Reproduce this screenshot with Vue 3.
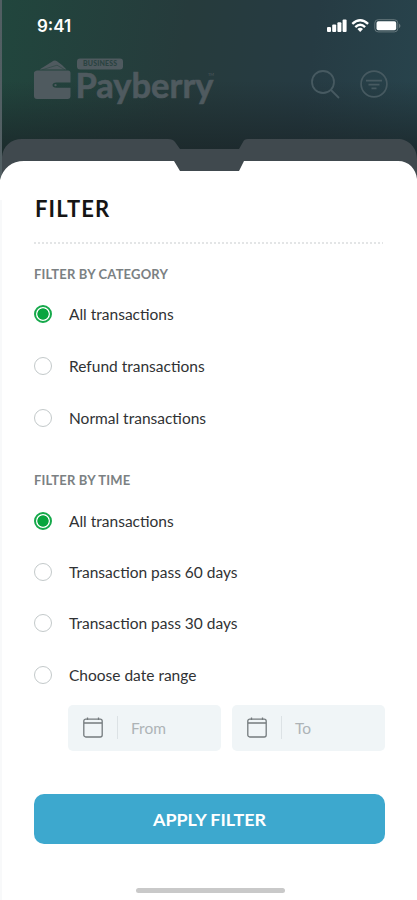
<script setup>
import { ref } from 'vue'

const category = ref('all')
const time = ref('all')
const categories = [
  { value: 'all', label: 'All transactions' },
  { value: 'refund', label: 'Refund transactions' },
  { value: 'normal', label: 'Normal transactions' },
]
const times = [
  { value: 'all', label: 'All transactions' },
  { value: '60', label: 'Transaction pass 60 days' },
  { value: '30', label: 'Transaction pass 30 days' },
  { value: 'range', label: 'Choose date range' },
]
const dates = ['From', 'To']
</script>

<template>
  <div class="screen">
    <svg class="sheets" width="417" height="200" viewBox="0 0 417 200" aria-hidden="true">
      <path class="sheet-back" d="M2 200V157C3 146 11 139 22 139H168Q173 139 175 142L180 149H239L243 142Q244 139 248 139H398C408 139 417 147 417 159V200Z" />
      <path class="sheet-front" d="M0 200V180C3 168 12 161 24 161H174L180 171H239L244 161H398C409 161 416 169 417 179V200Z" />
    </svg>

    <header class="top">
      <div class="status">
        <span class="clock">9:41</span>
        <svg width="76" height="16" viewBox="0 0 76 16" fill="#fff">
          <rect x="1" y="9" width="4" height="5" rx="1" />
          <rect x="6.2" y="6.5" width="4" height="7.5" rx="1" />
          <rect x="11.4" y="4.2" width="4" height="9.8" rx="1" />
          <rect x="16.6" y="1.5" width="4" height="12.5" rx="1" />
          <g fill="none" stroke="#fff" stroke-width="2.4">
            <path d="M26.3 5.8Q34.2-1.5 42.1 5.8" />
            <path d="M29.3 9.1Q34.2 4.5 39.1 9.1" />
          </g>
          <path d="M31.4 11Q34.2 8.6 37 11L34.2 14Z" />
          <rect x="48.8" y="1.7" width="23" height="12.2" rx="3.4" fill="none" stroke="#65777c" stroke-width="1" />
          <rect x="50.5" y="3.3" width="19.7" height="9" rx="1.8" />
          <path d="M73 5.4Q76 7.8 73 10.2Z" fill="#65777c" />
        </svg>
      </div>

      <div class="brand-bar">
        <svg class="logo" width="182" height="48" viewBox="0 0 182 48">
          <path d="M5.5 11.5L19.5 2.8Q21.2 1.8 23 3.2L28 7L32.5 11.5H5.5Z" fill="#4f5a5f" />
          <path d="M8 11.8L23 7.2L31 11.8" fill="none" stroke="#2a4642" stroke-width="0.6" />
          <path d="M3.5 12.5H34Q36.5 12.5 36.5 15V24.5H22.5Q18.5 24.5 18.5 27Q18.5 29.8 22.5 29.8H36.5V38Q36.5 41 33.5 41H3Q0 41 0 38V15Q0 13 3.5 12.5Z" fill="#4f5a5f" />
          <circle cx="21.5" cy="27.1" r="1.2" fill="#4f5a5f" />
          <rect x="43" y="0.5" width="46" height="11" rx="3" fill="#4f5a5f" />
          <text class="badge-text" x="49" y="8.4" textLength="34">BUSINESS</text>
          <text class="brand-text" x="41.5" y="40" textLength="138" lengthAdjust="spacingAndGlyphs">Payberry</text>
          <text class="tm" x="174" y="18">TM</text>
        </svg>
        <div class="actions">
          <svg width="29" height="29" viewBox="0 0 29 29" fill="none" stroke="#475a61" stroke-width="1.8">
            <circle cx="12" cy="12" r="11" />
            <path d="M20 20L28 28" />
          </svg>
          <svg width="28" height="28" viewBox="0 0 28 28" fill="none" stroke="#475a61" stroke-width="1.7">
            <circle cx="14" cy="14" r="12.9" />
            <path d="M6 10.7H22M8.5 14.7H19.5M11.5 18.4H16.5" />
          </svg>
        </div>
      </div>
    </header>

    <main class="sheet">
      <h1>FILTER</h1>
      <div class="divider"></div>

      <section class="category">
        <h2>FILTER BY CATEGORY</h2>
        <label v-for="c in categories" :key="c.value" class="option">
          <input v-model="category" type="radio" name="category" :value="c.value" />
          <span class="radio"></span>
          <span class="label">{{ c.label }}</span>
        </label>
      </section>

      <section class="time">
        <h2>FILTER BY TIME</h2>
        <label v-for="t in times" :key="t.value" class="option">
          <input v-model="time" type="radio" name="time" :value="t.value" />
          <span class="radio"></span>
          <span class="label">{{ t.label }}</span>
        </label>
      </section>

      <div class="dates">
        <div v-for="d in dates" :key="d" class="date">
          <svg width="20" height="21" viewBox="0 0 20 21" fill="none" stroke="#747b7e" stroke-width="1.3">
            <rect x="0.8" y="2.2" width="18.4" height="17.8" rx="2" />
            <path d="M1 6H19M4.5 0.5V3M15.5 0.5V3" />
          </svg>
          <span class="bar"></span>
          <span class="placeholder">{{ d }}</span>
        </div>
      </div>

      <button class="apply">APPLY FILTER</button>
      <div class="home"></div>
    </main>
  </div>
</template>

<style>
body {
  margin: 0;
}
</style>

<style scoped>
.screen {
  position: relative;
  width: 417px;
  height: 900px;
  box-sizing: border-box;
  overflow: hidden;
  display: flex;
  flex-direction: column;
  font-family: Lato, sans-serif;
  background:
    linear-gradient(#515e62, #536064) 0 0 / 2px 180px no-repeat,
    linear-gradient(180deg, rgba(26, 37, 40, 0) 45%, rgba(26, 37, 40, 0.75) 82%) 0 0 / 417px 180px no-repeat,
    linear-gradient(98deg, #21463d 0%, #263b3c 43%, #263b43 72%, #28444d 100%) 0 0 / 417px 180px no-repeat,
    linear-gradient(90deg, #f8f9fa 2px, #fff 2px);
}
.sheets {
  position: absolute;
  left: 0;
  top: 0;
}
.sheet-back {
  fill: #40494e;
}
.sheet-front {
  fill: #fff;
}
.top {
  position: relative;
  height: 161px;
  flex: none;
}
.status {
  display: flex;
  justify-content: space-between;
  align-items: center;
  height: 20px;
  padding: 16px 15px 0 37px;
}
.clock {
  font-family: Inter, sans-serif;
  font-size: 17px;
  font-weight: 600;
  color: #fff;
}
.brand-bar {
  display: flex;
  justify-content: space-between;
  padding: 22px 29px 0 34px;
}
.logo {
  overflow: visible;
}
.badge-text {
  font-size: 7px;
  font-weight: 900;
  fill: #2b4341;
}
.brand-text {
  font-size: 34px;
  font-weight: 700;
  fill: #4f5a5f;
  stroke: #4f5a5f;
  stroke-width: 0.6;
}
.tm {
  font-size: 4px;
  fill: #4f5a5f;
}
.actions {
  display: flex;
  gap: 20px;
  padding-top: 12px;
}
.sheet {
  position: relative;
  flex: 1;
  display: flex;
  flex-direction: column;
  padding: 33px 32px 0 34px;
}
h1 {
  margin: 0;
  height: 30px;
  line-height: 30px;
  padding-left: 1px;
  font-size: 22px;
  font-weight: 700;
  letter-spacing: 1.15px;
  color: #151515;
}
.divider {
  margin: 18px 2px 0 0;
  height: 2px;
  background: repeating-linear-gradient(90deg, #e3e5e6 0 2px, #fff 2px 4px);
}
h2 {
  margin: 0;
  height: 18px;
  line-height: 18px;
  font-size: 13px;
  font-weight: 700;
  letter-spacing: 0.17px;
  color: #7b8183;
}
.category {
  padding-top: 21px;
}
.time {
  padding-top: 27px;
}
.option {
  display: flex;
  align-items: center;
  gap: 17px;
  height: 51.4px;
}
.category .option {
  height: 52px;
}
h2 + .option {
  margin-top: 5px;
}
.time h2 + .option {
  margin-top: 6px;
}
.option input {
  position: absolute;
  opacity: 0;
  width: 0;
  height: 0;
  margin: 0;
}
.radio {
  box-sizing: border-box;
  width: 18px;
  height: 18px;
  border: 1.5px solid #c3c9ca;
  border-radius: 50%;
}
.option input:checked + .radio {
  border: 2px solid #16a94b;
  background: radial-gradient(circle, #08a53e 0 5.3px, #fff 6px);
}
.label {
  font-size: 15.5px;
  color: #303234;
}
.dates {
  display: flex;
  gap: 11px;
  padding: 4.4px 0 0 34px;
}
.date {
  flex: 1;
  height: 46px;
  display: flex;
  align-items: center;
  padding-left: 15px;
  box-sizing: border-box;
  border-radius: 5px;
  background: #f0f5f7;
}
.bar {
  width: 1px;
  height: 23px;
  margin: 0 13px 0 14px;
  background: #dce2e5;
}
.placeholder {
  font-size: 15.5px;
  color: #adb3b6;
}
.apply {
  margin-top: 43px;
  height: 50px;
  border: 0;
  border-radius: 10px;
  background: #3da8ce;
  color: #fff;
  font: 700 17.9px Lato, sans-serif;
}
.home {
  width: 149px;
  height: 5px;
  margin: 44px 0 0 102px;
  border-radius: 3px;
  background: #c9c9c9;
}
</style>
